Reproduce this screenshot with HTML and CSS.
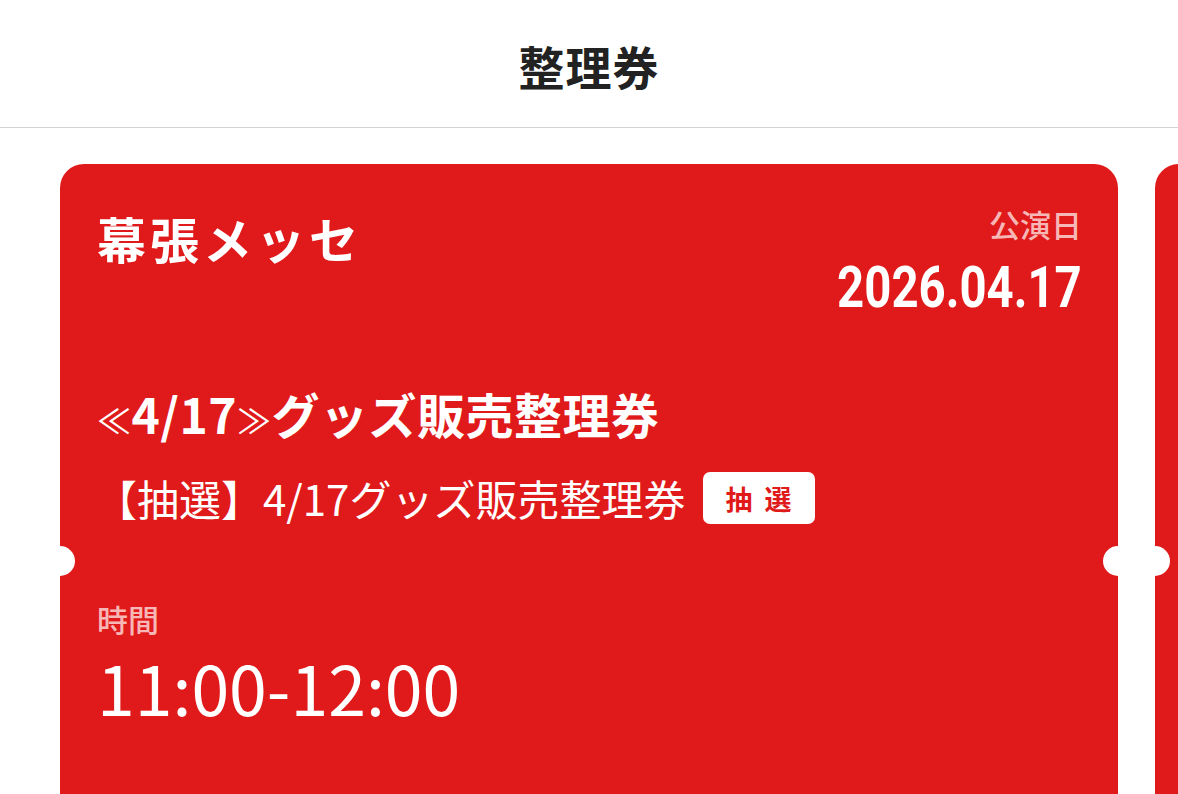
FILE: index.html
```html
<!DOCTYPE html>
<html lang="ja">
<head>
<meta charset="utf-8">
<title>整理券</title>
<link rel="stylesheet" href="styles.css">
</head>
<body>
<header class="topbar">
  <h1 class="topbar-title">整理券</h1>
</header>
<main class="tickets">
  <section class="ticket">
    <span class="notch notch-left"></span>
    <span class="notch notch-right"></span>
    <div class="ticket-head">
      <div class="venue">幕張メッセ</div>
      <div class="date-box">
        <div class="label">公演日</div>
        <div class="date">2026.04.17</div>
      </div>
    </div>
    <div class="ticket-title"><span class="guill">≪</span>4/17<span class="guill">≫</span>グッズ販売整理券</div>
    <div class="ticket-sub">
      <span class="sub-text">【抽選】4/17グッズ販売整理券</span>
      <span class="badge">抽 選</span>
    </div>
    <div class="label time-label">時間</div>
    <div class="time">11:00-12:00</div>
  </section>
  <section class="ticket">
    <span class="notch notch-left"></span>
  </section>
</main>
</body>
</html>
```
FILE: styles.css
```css
html, body {
  margin: 0;
  padding: 0;
  background: #ffffff;
  overflow: hidden;
  height: 794px;
}
body {
  font-family: "Noto Sans CJK JP", "Noto Sans", sans-serif;
  color: #222222;
}
.topbar {
  height: 127px;
  border-bottom: 1px solid #d2d2d2;
  display: flex;
  align-items: center;
  justify-content: center;
}
.topbar-title {
  margin: 0;
  font-size: 46px;
  font-weight: 700;
  line-height: 1;
  letter-spacing: 1px;
  color: #222222;
  padding-top: 2px;
}
.tickets {
  display: flex;
  gap: 37px;
  padding: 36px 0 0 60px;
  width: max-content;
}
.ticket {
  position: relative;
  width: 1058px;
  height: 700px;
  box-sizing: border-box;
  background: #e01a1a;
  border-radius: 24px;
  padding: 42px 36px 0 37px;
  color: #ffffff;
  flex: none;
}
.notch {
  position: absolute;
  top: 382px;
  width: 30px;
  height: 30px;
  border-radius: 50%;
  background: #ffffff;
}
.notch-left { left: -15px; }
.notch-right { right: -15px; }
.ticket-head {
  display: flex;
  justify-content: space-between;
  align-items: flex-start;
}
.venue {
  font-size: 49px;
  font-weight: 700;
  line-height: 60px;
  letter-spacing: 4px;
  margin-top: 2px;
}
.date-box {
  display: flex;
  flex-direction: column;
  align-items: flex-end;
}
.label {
  font-size: 31px;
  line-height: 36px;
  font-weight: 500;
  color: #f8b7b7;
}
.date {
  font-family: Roboto, "Liberation Sans", sans-serif;
  font-weight: 700;
  font-size: 57px;
  line-height: 58px;
  margin-top: 17px;
  letter-spacing: 0;
  transform: scaleX(0.83);
  transform-origin: right center;
}
.ticket-title {
  font-size: 48px;
  font-weight: 700;
  line-height: 56px;
  margin-top: 68px;
  letter-spacing: 0.5px;
}
.guill {
  font-size: 34px;
  font-weight: 400;
}
.ticket-sub {
  display: flex;
  align-items: center;
  gap: 18px;
  margin-top: 22px;
  height: 56px;
}
.sub-text {
  font-size: 42px;
  line-height: 56px;
  font-weight: 400;
  margin-left: -2px;
}
.badge {
  background: #ffffff;
  color: #e01a1a;
  border-radius: 7px;
  height: 52px;
  padding: 0 20px 0 22px;
  display: flex;
  align-items: center;
  font-size: 27px;
  font-weight: 700;
  letter-spacing: 3px;
}
.time-label {
  margin-top: 73px;
  line-height: 40px;
}
.time {
  font-size: 68px;
  line-height: 80px;
  font-weight: 400;
  margin-top: 8px;
}
```
